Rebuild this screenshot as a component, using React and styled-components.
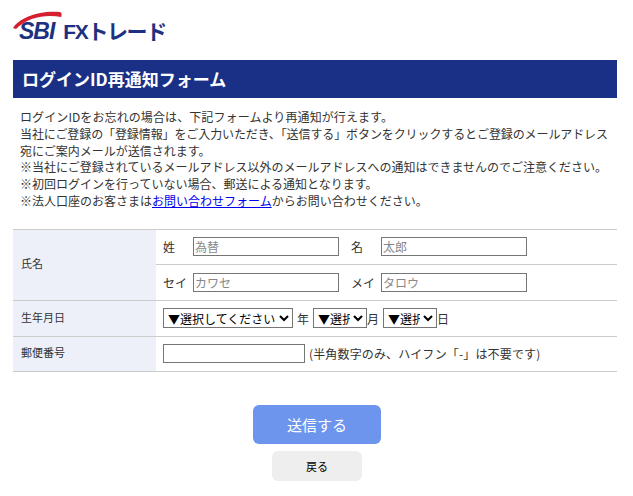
import styled, { createGlobalStyle } from "styled-components";

const GlobalStyle = createGlobalStyle`
  body {
    margin: 0;
    background: #fff;
    color: #333;
    font-family: "Noto Sans CJK JP", "Liberation Sans", sans-serif;
    font-size: 12px;
  }
`;

const Page = styled.div`
  width: 633px;
  height: 496px;
  overflow: hidden;
  padding: 0 16px 0 13px;
  box-sizing: border-box;
`;

const LogoRow = styled.div`
  height: 60px;
  display: flex;
  align-items: flex-start;
  padding: 11px 0 0 1px;
  box-sizing: border-box;
`;

const Logo = styled.div`
  position: relative;
  display: flex;
  align-items: baseline;
  gap: 9px;
  height: 32px;
  padding: 9px 0 0 5px;
  box-sizing: border-box;
  color: #1d3180;
  font-family: "Liberation Sans", "Noto Sans CJK JP", sans-serif;
  font-weight: 700;
  line-height: 22px;
`;

const LogoMark = styled.span`
  font-size: 23px;
  font-style: italic;
  letter-spacing: -1px;
`;

const LogoName = styled.span`
  font-size: 21px;
  letter-spacing: -1.4px;
`;

const Swoosh = styled.svg`
  position: absolute;
  left: -1px;
  top: 0;
`;

const Title = styled.h1`
  margin: 0;
  height: 38px;
  padding-left: 9px;
  background: #1a3086;
  color: #fff;
  font-size: 17px;
  font-weight: 700;
  line-height: 38px;
`;

const Notice = styled.div`
  margin: 11px 0 0;
  padding-left: 7px;
  font-size: 12px;
  line-height: 16.8px;
  white-space: nowrap;
`;

const NoticeLine = styled.div`
  letter-spacing: ${(props) => props.$ls || 0}px;
`;

const NoticeLink = styled.a`
  color: #0000ee;
  text-decoration: underline;
`;

const FormTable = styled.table`
  width: 100%;
  margin-top: 19.2px;
  border-collapse: collapse;
  border-top: 1px solid #ccc;
`;

const Row = styled.tr`
  border-bottom: 1px solid #ccc;
  height: ${(props) => props.$h}px;
`;

const Label = styled.th`
  width: 143px;
  padding: 0 0 3px 8px;
  box-sizing: border-box;
  background: #edf0f8;
  font-size: 11px;
  font-weight: 400;
  text-align: left;
`;

const Cell = styled.td`
  padding: 0 0 0 7px;
`;

const Inline = styled.div`
  display: flex;
  align-items: center;
  white-space: nowrap;
`;

const NameLabel = styled.span`
  width: ${(props) => props.$w}px;
  margin-left: ${(props) => props.$gap || 0}px;
  font-size: 12px;
`;

const TextInput = styled.input`
  width: ${(props) => props.$w}px;
  height: 19px;
  padding: 0 1px;
  box-sizing: border-box;
  border: 1px solid #767676;
  border-radius: 0;
  font-family: inherit;
  font-size: 12px;
  &::placeholder {
    color: #888;
  }
`;

const Select = styled.select`
  width: ${(props) => props.$w}px;
  height: 20px;
  padding: 0;
  box-sizing: border-box;
  border: 1px solid #767676;
  border-radius: 0;
  background: #fff;
  color: #000;
  font-family: inherit;
  font-size: 12px;
`;

const Unit = styled.span`
  margin: ${(props) => props.$m};
  font-size: 12px;
`;

const Hint = styled.span`
  margin-left: 4px;
  font-size: 12px;
  letter-spacing: 0.15px;
`;

const Actions = styled.div`
  display: flex;
  flex-direction: column;
  align-items: center;
  gap: 7px;
  margin: 33px 0 0 4px;
`;

const SubmitButton = styled.button`
  width: 128px;
  height: 39px;
  border: 0;
  border-radius: 6px;
  background: #6e95ee;
  color: #fff;
  font-family: inherit;
  font-size: 15px;
`;

const BackButton = styled.button`
  width: 90px;
  height: 30px;
  border: 0;
  border-radius: 6px;
  background: #eee;
  color: #000;
  font-family: inherit;
  font-size: 11px;
`;

export default function App() {
  return (
    <Page>
      <GlobalStyle />
      <LogoRow>
        <Logo>
          <Swoosh width="50" height="22" viewBox="0 0 50 22">
            <path d="M0 17C6 7 26 -1 47 1C49 2 49 4 48 6C34 3 14 6 3 18Z" fill="#d5202f" />
          </Swoosh>
          <LogoMark>SBI</LogoMark>
          <LogoName>FXトレード</LogoName>
        </Logo>
      </LogoRow>
      <Title>ログインID再通知フォーム</Title>
      <Notice>
        <NoticeLine $ls={0.1}>ログインIDをお忘れの場合は、下記フォームより再通知が行えます。</NoticeLine>
        <NoticeLine $ls={-0.1}>当社にご登録の「登録情報」をご入力いただき、「送信する」ボタンをクリックするとご登録のメールアドレス</NoticeLine>
        <NoticeLine>宛にご案内メールが送信されます。</NoticeLine>
        <NoticeLine>※当社にご登録されているメールアドレス以外のメールアドレスへの通知はできませんのでご注意ください。</NoticeLine>
        <NoticeLine>※初回ログインを行っていない場合、郵送による通知となります。</NoticeLine>
        <NoticeLine>
          ※法人口座のお客さまは<NoticeLink href="#">お問い合わせフォーム</NoticeLink>からお問い合わせください。
        </NoticeLine>
      </Notice>
      <FormTable>
        <tbody>
          <Row $h={35}>
            <Label rowSpan={2}>氏名</Label>
            <Cell>
              <Inline>
                <NameLabel $w={30}>姓</NameLabel>
                <TextInput $w={146} placeholder="為替" />
                <NameLabel $w={30} $gap={12}>名</NameLabel>
                <TextInput $w={146} placeholder="太郎" />
              </Inline>
            </Cell>
          </Row>
          <Row $h={36}>
            <Cell>
              <Inline>
                <NameLabel $w={30}>セイ</NameLabel>
                <TextInput $w={146} placeholder="カワセ" />
                <NameLabel $w={30} $gap={12}>メイ</NameLabel>
                <TextInput $w={146} placeholder="タロウ" />
              </Inline>
            </Cell>
          </Row>
          <Row $h={36}>
            <Label>生年月日</Label>
            <Cell>
              <Inline>
                <Select $w={130}><option>▼選択してください</option></Select>
                <Unit $m="0 4px">年</Unit>
                <Select $w={54}><option>▼選択</option></Select>
                <Unit $m="0 4px 0 0">月</Unit>
                <Select $w={54}><option>▼選択</option></Select>
                <Unit $m="0">日</Unit>
              </Inline>
            </Cell>
          </Row>
          <Row $h={35}>
            <Label>郵便番号</Label>
            <Cell>
              <Inline>
                <TextInput $w={142} />
                <Hint>(半角数字のみ、ハイフン「-」は不要です)</Hint>
              </Inline>
            </Cell>
          </Row>
        </tbody>
      </FormTable>
      <Actions>
        <SubmitButton type="button">送信する</SubmitButton>
        <BackButton type="button">戻る</BackButton>
      </Actions>
    </Page>
  );
}
